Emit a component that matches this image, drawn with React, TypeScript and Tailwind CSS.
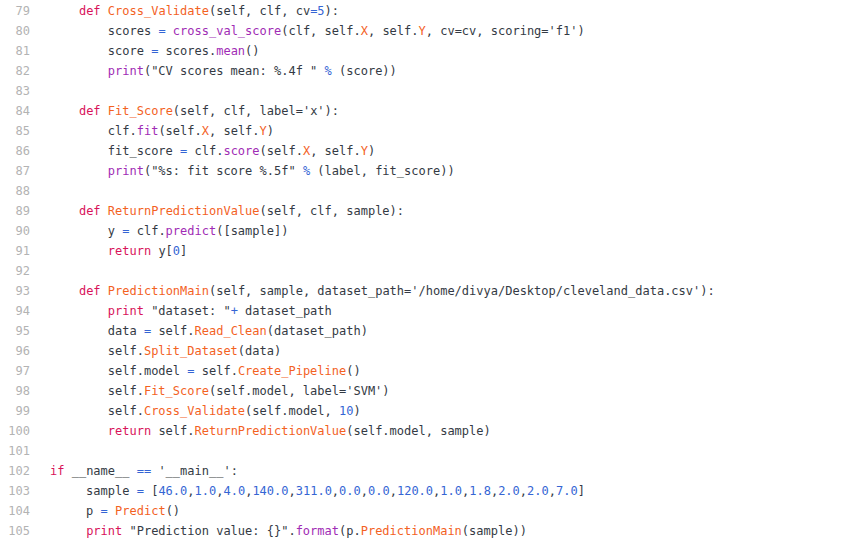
import React from "react";

type Tok = [string, string?];

const K = "text-[#d8135a]"; // keywords
const F = "text-[#f3621f]"; // own functions / attributes
const B = "text-[#9f2cb5]"; // builtins / library calls
const N = "text-[#3565d4]"; // numbers / operators

const lines: Tok[][] = [
  [["    "], ["def", K], [" "], ["Cross_Validate", F], ["(self, clf, cv"], ["=5", N], ["):"]],
  [["        scores "], ["=", N], [" "], ["cross_val_score", B], ["(clf, self."], ["X", F], [", self."], ["Y", F], [", cv=cv, scoring='f1')"]],
  [["        score "], ["=", N], [" scores."], ["mean", B], ["()"]],
  [["        "], ["print", B], ["(\"CV scores mean: %.4f \" "], ["%", N], [" (score))"]],
  [[""]],
  [["    "], ["def", K], [" "], ["Fit_Score", F], ["(self, clf, label='x'):"]],
  [["        clf."], ["fit", B], ["(self."], ["X", F], [", self."], ["Y", F], [")"]],
  [["        fit_score "], ["=", N], [" clf."], ["score", B], ["(self."], ["X", F], [", self."], ["Y", F], [")"]],
  [["        "], ["print", B], ["(\"%s: fit score %.5f\" "], ["%", N], [" (label, fit_score))"]],
  [[""]],
  [["    "], ["def", K], [" "], ["ReturnPredictionValue", F], ["(self, clf, sample):"]],
  [["        y "], ["=", N], [" clf."], ["predict", B], ["([sample])"]],
  [["        "], ["return", K], [" y["], ["0", N], ["]"]],
  [[""]],
  [["    "], ["def", K], [" "], ["PredictionMain", F], ["(self, sample, dataset_path='/home/divya/Desktop/cleveland_data.csv'):"]],
  [["        "], ["print", K], [" \"dataset: \""], ["+", N], [" dataset_path"]],
  [["        data "], ["=", N], [" self."], ["Read_Clean", F], ["(dataset_path)"]],
  [["        self."], ["Split_Dataset", F], ["(data)"]],
  [["        self.model "], ["=", N], [" self."], ["Create_Pipeline", F], ["()"]],
  [["        self."], ["Fit_Score", F], ["(self.model, label='SVM')"]],
  [["        self."], ["Cross_Validate", F], ["(self.model, "], ["10", N], [")"]],
  [["        "], ["return", K], [" self."], ["ReturnPredictionValue", F], ["(self.model, sample)"]],
  [[""]],
  [["if", K], [" __name__ "], ["==", N], [" '__main__':"]],
  [["     sample "], ["=", N], [" ["], ["46.0", N], [","], ["1.0", N], [","], ["4.0", N], [","], ["140.0", N], [","], ["311.0", N], [","], ["0.0", N], [","], ["0.0", N], [","], ["120.0", N], [","], ["1.0", N], [","], ["1.8", N], [","], ["2.0", N], [","], ["2.0", N], [","], ["7.0", N], ["]"]],
  [["     p "], ["=", N], [" "], ["Predict", F], ["()"]],
  [["     "], ["print", K], [" \"Prediction value: {}\"."], ["format", B], ["(p."], ["PredictionMain", F], ["(sample))"]],
];

export default function App() {
  return (
    <div className="w-[852px] h-[539px] bg-white overflow-hidden pt-[1px] font-['DejaVu_Sans_Mono',monospace] text-[12px] leading-[20px] text-[#343a44]">
      {lines.map((toks, i) => (
        <div key={i} className="flex h-5 whitespace-pre">
          <span className="w-[30px] text-right text-[#b3b3b3] shrink-0">{79 + i}</span>
          <span className="pl-[20px]">
            {toks.map(([t, c], j) => (
              <span key={j} className={c}>
                {t}
              </span>
            ))}
          </span>
        </div>
      ))}
    </div>
  );
}
